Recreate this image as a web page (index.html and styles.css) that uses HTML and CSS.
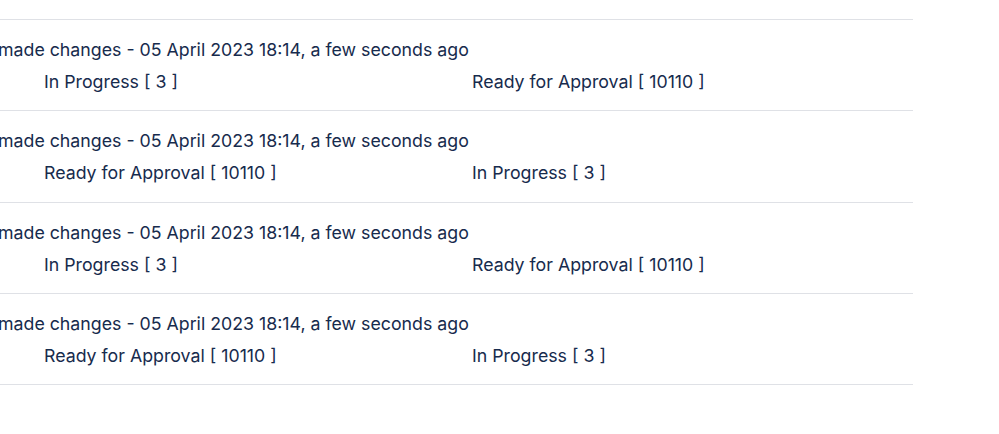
FILE: index.html
```html
<!DOCTYPE html>
<html lang="en">
<head>
  <meta charset="UTF-8" />
  <meta name="viewport" content="width=device-width, initial-scale=1.0" />
  <title>History</title>
  <link rel="stylesheet" href="styles.css">
</head>
<body>
  <div class="history">
    <div class="history-item">
      <div class="history-head">made changes - 05 April 2023 18:14, a few seconds ago</div>
      <div class="history-change">
        <span class="old">In Progress [ 3 ]</span>
        <span class="new">Ready for Approval [ 10110 ]</span>
      </div>
    </div>
    <div class="history-item">
      <div class="history-head">made changes - 05 April 2023 18:14, a few seconds ago</div>
      <div class="history-change">
        <span class="old">Ready for Approval [ 10110 ]</span>
        <span class="new">In Progress [ 3 ]</span>
      </div>
    </div>
    <div class="history-item">
      <div class="history-head">made changes - 05 April 2023 18:14, a few seconds ago</div>
      <div class="history-change">
        <span class="old">In Progress [ 3 ]</span>
        <span class="new">Ready for Approval [ 10110 ]</span>
      </div>
    </div>
    <div class="history-item">
      <div class="history-head">made changes - 05 April 2023 18:14, a few seconds ago</div>
      <div class="history-change">
        <span class="old">Ready for Approval [ 10110 ]</span>
        <span class="new">In Progress [ 3 ]</span>
      </div>
    </div>
  </div>
</body>
</html>
```

FILE: styles.css
```css
body {
  margin: 0;
  font-family: Inter, "Noto Sans", sans-serif;
  font-size: 17.75px;
  color: #172b4d;
  background-color: #fff;
}
.history {
  margin-top: 19px;
  width: 913px;
  border-top: 1px solid #dfe1e6;
}
.history-item {
  padding: 20px 0 18.25px;
  border-bottom: 1px solid #dfe1e6;
}
.history-head {
  line-height: 20px;
  margin-left: -2px;
}
.history-change {
  display: flex;
  margin-top: 12px;
  line-height: 20px;
  padding-left: 44px;
}
.old {
  width: 428px;
}
```
